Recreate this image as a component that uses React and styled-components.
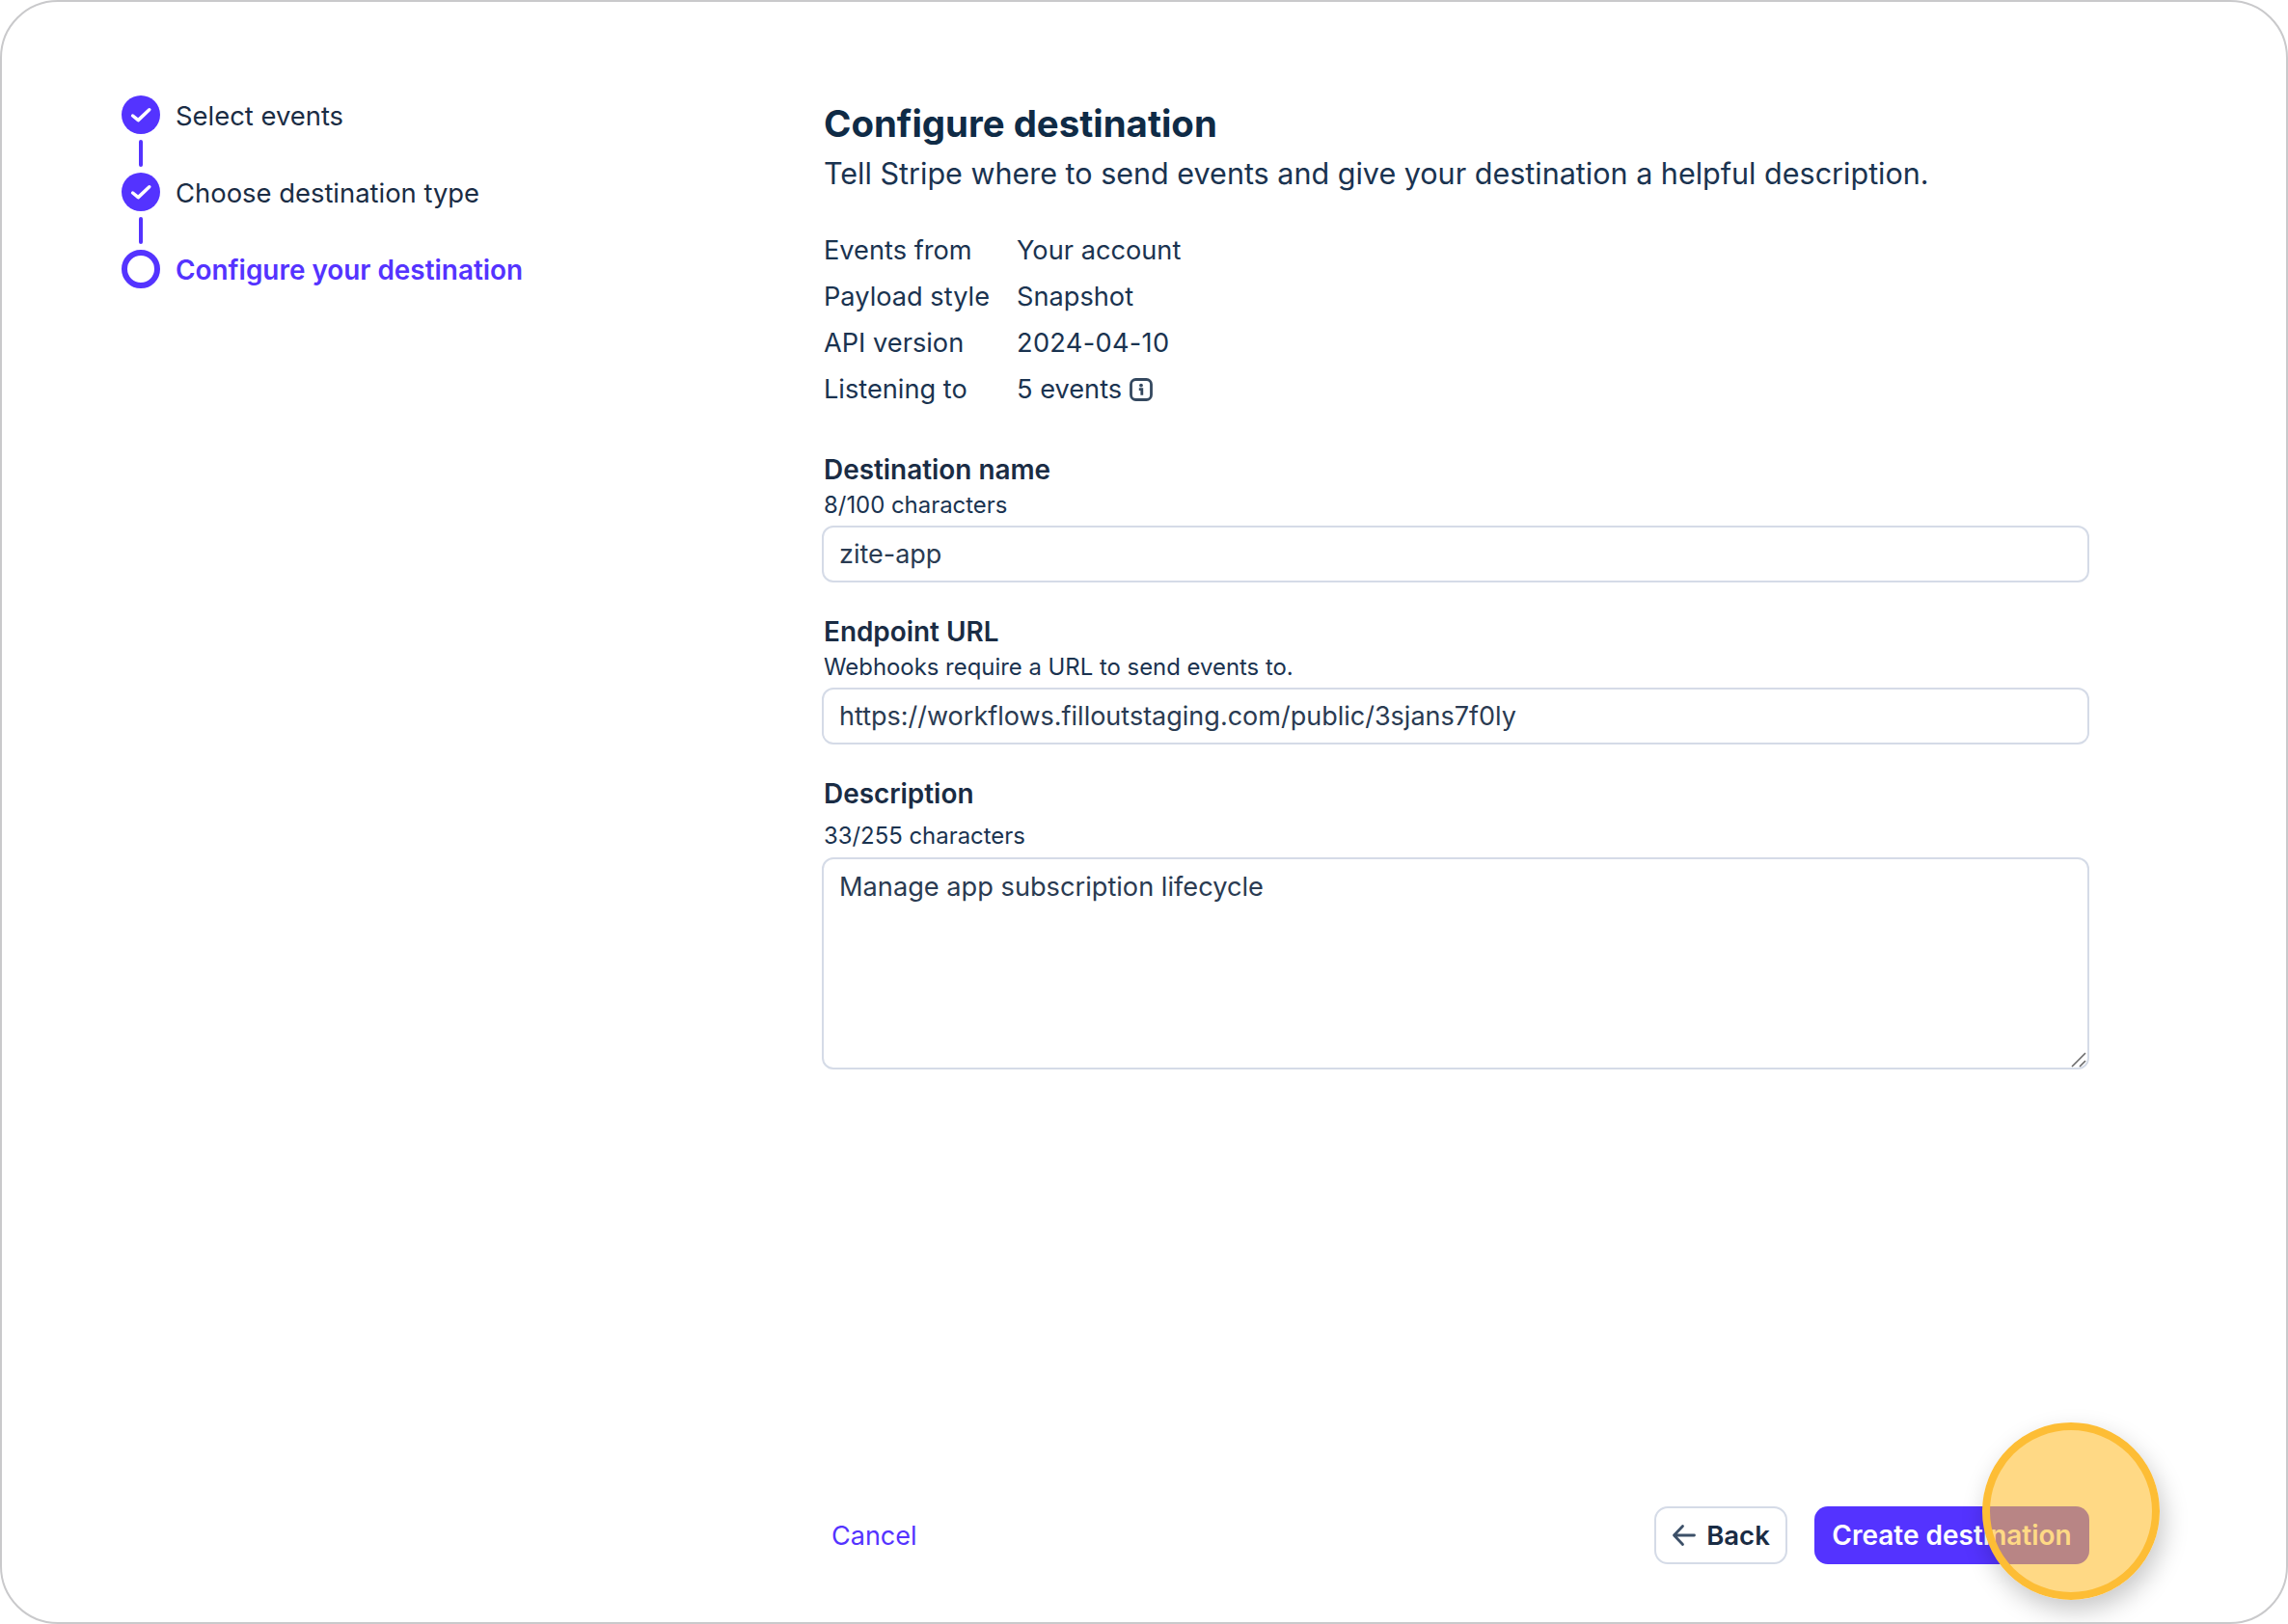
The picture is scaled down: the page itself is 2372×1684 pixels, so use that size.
import React from "react";
import styled, { createGlobalStyle } from "styled-components";

const GlobalStyle = createGlobalStyle`
  html, body {
    margin: 0;
    padding: 0;
    background: #fff;
  }
  body {
    font-family: Inter, "Liberation Sans", sans-serif;
    color: #1a2c44;
  }
`;

const steps = [
  { label: "Select events", done: true },
  { label: "Choose destination type", done: true },
  { label: "Configure your destination", done: false },
];

const details = [
  ["Events from", "Your account"],
  ["Payload style", "Snapshot"],
  ["API version", "2024-04-10"],
  ["Listening to", "5 events"],
];

function CheckIcon() {
  return (
    <svg width="24" height="24" viewBox="0 0 24 24" fill="none">
      <path d="M3.6 13l5.7 4.6L20.8 6.8" stroke="#fff" strokeWidth="3.5" strokeLinecap="round" strokeLinejoin="round" />
    </svg>
  );
}

function InfoIcon() {
  return (
    <svg width="24" height="24" viewBox="0 0 24 24" fill="none">
      <rect x="1.5" y="1.5" width="21" height="21" rx="5" stroke="#34485f" strokeWidth="2.8" />
      <circle cx="12" cy="7.6" r="1.9" fill="#34485f" />
      <path d="M9.8 11.6h3v6.2" stroke="#34485f" strokeWidth="2.8" />
    </svg>
  );
}

function BackArrow() {
  return (
    <svg width="26" height="26" viewBox="0 0 26 26" fill="none">
      <path d="M11.5 3.5L2.5 13l9 9.5M2.5 13h21" stroke="#3c5068" strokeWidth="2.8" strokeLinecap="round" strokeLinejoin="round" />
    </svg>
  );
}

function ResizeGrip() {
  return (
    <svg width="18" height="18" viewBox="0 0 18 18" fill="none">
      <path d="M2 16L16 2M10 16l6-6" stroke="#6b6b6b" strokeWidth="1.6" />
    </svg>
  );
}

export default function App() {
  return (
    <>
      <GlobalStyle />
      <Frame>
        <Stepper>
          {steps.map((step, i) => (
            <React.Fragment key={step.label}>
              {i > 0 && <Connector />}
              <Step>
                <StepDot $done={step.done}>{step.done && <CheckIcon />}</StepDot>
                <StepLabel $active={!step.done}>{step.label}</StepLabel>
              </Step>
            </React.Fragment>
          ))}
        </Stepper>

        <Main>
          <Title>Configure destination</Title>
          <Subtitle>Tell Stripe where to send events and give your destination a helpful description.</Subtitle>

          <Details>
            {details.map(([key, value]) => (
              <DetailRow key={key}>
                <DetailKey>{key}</DetailKey>
                <DetailValue $numeric={key === "API version"}>
                  {value}
                  {key === "Listening to" && <InfoIcon />}
                </DetailValue>
              </DetailRow>
            ))}
          </Details>

          <Field>
            <FieldLabel>Destination name</FieldLabel>
            <FieldHint>8/100 characters</FieldHint>
            <TextInput readOnly value="zite-app" />
          </Field>

          <Field>
            <FieldLabel>Endpoint URL</FieldLabel>
            <FieldHint>Webhooks require a URL to send events to.</FieldHint>
            <TextInput readOnly value="https://workflows.filloutstaging.com/public/3sjans7f0ly" />
          </Field>

          <Field>
            <FieldLabel>Description</FieldLabel>
            <FieldHint $spaced>33/255 characters</FieldHint>
            <TextAreaWrap>
              <TextArea readOnly value="Manage app subscription lifecycle" />
              <GripSlot>
                <ResizeGrip />
              </GripSlot>
            </TextAreaWrap>
          </Field>

          <Footer>
            <CancelLink>Cancel</CancelLink>
            <Actions>
              <BackButton>
                <BackArrow />
                Back
              </BackButton>
              <CreateWrap>
                <CreateButton>Create destination</CreateButton>
                <Highlight />
              </CreateWrap>
            </Actions>
          </Footer>
        </Main>
      </Frame>
    </>
  );
}

const Frame = styled.div`
  box-sizing: border-box;
  width: 2372px;
  height: 1684px;
  border: 2px solid #c9c9cb;
  border-radius: 60px;
  background: #fff;
  padding: 97px 204px 60px 124px;
  display: grid;
  grid-template-columns: 726px 1fr;
  overflow: hidden;
`;

const Stepper = styled.div`
  display: flex;
  flex-direction: column;
  align-items: flex-start;
`;

const Step = styled.div`
  display: flex;
  align-items: center;
  gap: 16px;
  height: 40px;
`;

const StepDot = styled.div`
  box-sizing: border-box;
  width: 40px;
  height: 40px;
  border-radius: 50%;
  display: flex;
  align-items: center;
  justify-content: center;
  background: ${(p) => (p.$done ? "#5433ff" : "#fff")};
  border: ${(p) => (p.$done ? "none" : "6px solid #5433ff")};
`;

const StepLabel = styled.span`
  padding-top: 1px;
  font-size: ${(p) => (p.$active ? 27.9 : 27.4)}px;
  line-height: 40px;
  font-weight: ${(p) => (p.$active ? 600 : 400)};
  color: ${(p) => (p.$active ? "#5433ff" : "#1a2c44")};
`;

const Connector = styled.div`
  width: 4px;
  height: 28px;
  margin: 6px 0 6px 18px;
  border-radius: 2px;
  background: #5433ff;
`;

const Main = styled.div`
  display: flex;
  flex-direction: column;
  min-width: 0;
`;

const Title = styled.h1`
  margin: 7px 0 0 2px;
  font-size: 38.4px;
  line-height: 44px;
  font-weight: 700;
  color: #0f2b46;
`;

const Subtitle = styled.p`
  margin: 10px 0 0 2px;
  font-size: 30.53px;
  line-height: 40px;
  color: #1a3350;
`;

const Details = styled.div`
  margin: 36px 0 7px 2px;
  display: flex;
  flex-direction: column;
`;

const DetailRow = styled.div`
  display: grid;
  grid-template-columns: 200px 1fr;
  font-size: 27.2px;
  line-height: 48px;
  color: #1a3350;
`;

const DetailKey = styled.span``;

const DetailValue = styled.span`
  display: flex;
  align-items: center;
  gap: 8px;
  letter-spacing: ${(p) => (p.$numeric ? "0.3px" : "normal")};
`;

const Field = styled.div`
  display: flex;
  flex-direction: column;
  margin-top: 34px;

  & + & {
    margin-top: 33px;
  }
`;

const FieldLabel = styled.label`
  margin-left: 2px;
  font-size: 27.9px;
  line-height: 36px;
  font-weight: 600;
  color: #1a2c44;
`;

const FieldHint = styled.span`
  margin: ${(p) => (p.$spaced ? "8px 0 0 2px" : "1px 0 1px 2px")};
  font-size: 23.9px;
  line-height: 36px;
  color: #1a3350;
`;

const TextInput = styled.input`
  box-sizing: border-box;
  width: 100%;
  height: 59px;
  margin-top: 2px;
  padding: 0 16px;
  border: 2px solid #d5dbe7;
  border-radius: 12px;
  outline: none;
  background: #fff;
  font-family: inherit;
  font-size: 27px;
  color: #2a3b52;
`;

const TextAreaWrap = styled.div`
  position: relative;
  margin-top: 4px;
`;

const TextArea = styled.textarea`
  box-sizing: border-box;
  display: block;
  width: 100%;
  height: 220px;
  padding: 11px 16px;
  border: 2px solid #d5dbe7;
  border-radius: 12px;
  outline: none;
  resize: none;
  background: #fff;
  font-family: inherit;
  font-size: 27.2px;
  line-height: 36px;
  color: #2a3b52;
`;

const GripSlot = styled.span`
  position: absolute;
  right: 2px;
  bottom: 1px;
  display: flex;
`;

const Footer = styled.div`
  margin-top: auto;
  display: flex;
  align-items: center;
  justify-content: space-between;
`;

const CancelLink = styled.a`
  margin-left: 10px;
  font-size: 27px;
  color: #5433ff;
  cursor: pointer;
`;

const Actions = styled.div`
  display: flex;
  align-items: center;
  gap: 28px;
`;

const BackButton = styled.button`
  box-sizing: border-box;
  width: 138px;
  height: 60px;
  padding: 0;
  display: flex;
  align-items: center;
  justify-content: center;
  gap: 10px;
  border: 2px solid #d5dbe7;
  border-radius: 14px;
  background: #fff;
  font-family: inherit;
  font-size: 27.5px;
  font-weight: 600;
  color: #1a2c44;
`;

const CreateWrap = styled.div`
  position: relative;
`;

const CreateButton = styled.button`
  box-sizing: border-box;
  width: 285px;
  height: 60px;
  padding: 0;
  border: none;
  border-radius: 14px;
  background: #5433ff;
  font-family: inherit;
  font-size: 28px;
  font-weight: 600;
  color: #fff;
`;

const Highlight = styled.div`
  position: absolute;
  left: 174px;
  top: -87px;
  box-sizing: border-box;
  width: 184px;
  height: 184px;
  border-radius: 50%;
  border: 8px solid #fdbd35;
  background: rgba(255, 190, 48, 0.59);
  box-shadow: 4px 11px 26px rgba(0, 0, 0, 0.22);
`;
